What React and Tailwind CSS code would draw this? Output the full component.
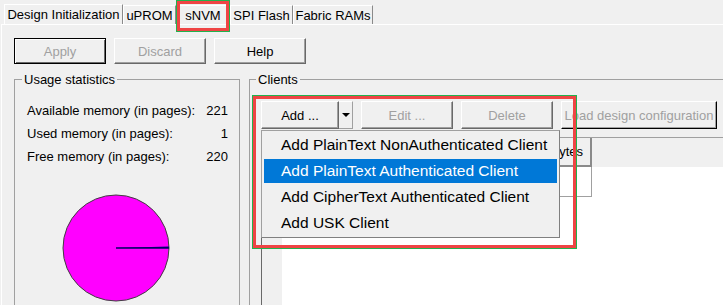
import React from 'react';

const btn =
  'flex items-center justify-center bg-[#f0f0f0] border border-t-white border-l-white border-r-[#696969] border-b-[#696969] shadow-[inset_-1px_-1px_0_#a0a0a0]';
const btnDefault =
  'flex items-center justify-center bg-[#f0f0f0] border border-black shadow-[inset_1px_1px_0_#fff,inset_-1px_-1px_0_#696969]';
const btnDark =
  'flex items-center justify-center bg-[#f0f0f0] border border-t-white border-l-white border-r-black border-b-black shadow-[inset_-1px_-1px_0_#a0a0a0]';

const tabs = [
  { label: 'Design Initialization', w: 'w-[119px] h-[20px]' },
  { label: 'uPROM', w: 'w-[53px] h-[19px]' },
  { label: 'sNVM', w: 'w-[54px] h-[19px]' },
  { label: 'SPI Flash', w: 'w-[63px] h-[19px]' },
  { label: 'Fabric RAMs', w: 'w-[80px] h-[19px]' },
];

const stats = [
  ['Available memory (in pages):', '221'],
  ['Used memory (in pages):', '1'],
  ['Free memory (in pages):', '220'],
];

const menuItems = [
  'Add PlainText NonAuthenticated Client',
  'Add PlainText Authenticated Client',
  'Add CipherText Authenticated Client',
  'Add USK Client',
];

function Pie() {
  return (
    <svg width="110" height="110" viewBox="0 0 110 110" className="block">
      <circle cx="55" cy="55" r="53" fill="#ff00ff" stroke="#404040" strokeWidth="1" />
      <path d="M55 55 L108 55 A53 53 0 0 0 107.98 53.49 Z" fill="#000080" />
      <line x1="55" y1="55" x2="108" y2="55" stroke="#000060" strokeWidth="1.5" />
    </svg>
  );
}

export default function App() {
  return (
    <div className="relative w-[723px] h-[305px] overflow-hidden bg-[#f0f0f0] font-['Liberation_Sans',Arial,sans-serif] text-[13px] leading-[15px] text-black">
      {/* tab strip */}
      <div className="flex h-[24px] items-end pl-[4px]">
        {tabs.map((t) => (
          <div
            key={t.label}
            className={`${t.w} flex items-center justify-center border-l border-t border-r border-l-white border-t-white border-r-[#8a8a8a]`}
          >
            {t.label}
          </div>
        ))}
      </div>

      {/* tab page */}
      <div className="ml-[1px] border-t border-l border-white pt-[13px] pl-[12px]">
        <div className="flex gap-[8px]">
          <div className={`${btnDefault} w-[92px] h-[26px] text-[#a0a0a0]`}>Apply</div>
          <div className={`${btn} w-[92px] h-[26px] text-[#a0a0a0]`}>Discard</div>
          <div className={`${btn} w-[92px] h-[26px]`}>Help</div>
        </div>

        <div className="flex gap-[9px] mt-[8px]">
          <fieldset className="w-[226px] h-[240px] shrink-0 border border-[#a0a0a0]">
            <legend className="ml-[7px] px-[2px]">Usage statistics</legend>
            <div className="pt-[12px] pl-[12px] pr-[11px]">
              {stats.map(([k, v]) => (
                <div key={k} className="flex h-[23px] items-center justify-between">
                  <span>{k}</span>
                  <span>{v}</span>
                </div>
              ))}
            </div>
            <div className="mt-[25px] ml-[46px]">
              <Pie />
            </div>
          </fieldset>

          <fieldset className="w-[520px] h-[240px] shrink-0 border border-[#a0a0a0]">
            <legend className="ml-[6px] px-[2px]">Clients</legend>
            <div className="pt-[14px] pl-[11px]">
              <div className="flex h-[28px] gap-[8px]">
                <div className="flex">
                  <div className={`${btn} w-[78px] h-[28px]`}>Add ...</div>
                  <div className="flex w-[14px] h-[28px] items-center justify-center border-t border-r border-b border-t-white border-r-[#a0a0a0] border-b-[#a0a0a0]">
                    <div className="w-0 h-0 border-l-[4px] border-r-[4px] border-t-[4px] border-l-transparent border-r-transparent border-t-black" />
                  </div>
                </div>
                <div className={`${btn} w-[92px] h-[28px] text-[#a0a0a0]`}>Edit ...</div>
                <div className={`${btn} w-[92px] h-[28px] text-[#a0a0a0]`}>Delete</div>
                <div className={`${btnDark} w-[156px] h-[28px] text-[#a0a0a0]`}>Load design configuration</div>
              </div>

              {/* clients grid, mostly hidden by the open menu */}
              <div className="mt-[8px] border-t border-l border-t-[#a0a0a0] border-l-[#696969]">
                <div className="flex h-[29px] bg-[#f0f0f0]">
                  <div className="w-[20px] shrink-0" />
                  <div className="w-[110px] shrink-0 border-r-2 border-b-2 border-[#8a8a8a]" />
                  <div className="w-[88px] shrink-0 border-r-2 border-b-2 border-[#8a8a8a]" />
                  <div className="w-[112px] shrink-0 flex items-center justify-end pr-[7px] border-r-2 border-b-2 border-[#8a8a8a]">Bytes</div>
                </div>
                <div className="flex h-[140px]">
                  <div className="w-[20px] shrink-0 bg-[#f0f0f0]" />
                  <div className="flex-1 bg-white">
                    <div className="flex h-[30px]">
                      <div className="w-[110px] shrink-0 border-r border-b border-[#a0a0a0]" />
                      <div className="w-[88px] shrink-0 border-r border-b border-[#a0a0a0]" />
                      <div className="w-[112px] shrink-0 border-r border-b border-[#a0a0a0]" />
                    </div>
                  </div>
                </div>
              </div>
            </div>
          </fieldset>
        </div>
      </div>

      {/* Add ... dropdown menu */}
      <div className="absolute left-[261px] top-[130px] w-[299px] h-[108px] border border-[#a0a0a0] border-r-[#808080] border-b-[#808080] bg-[#f0f0f0] pt-[2px] text-[15.5px] leading-[18px]">
        {menuItems.map((item, i) => (
          <div
            key={item}
            className={`mx-[2px] mb-[2px] h-[24px] flex items-center pl-[17px] ${
              i === 1 ? 'bg-[#0078d7] text-white' : ''
            }`}
          >
            {item}
          </div>
        ))}
      </div>

      {/* annotation boxes */}
      <div className="absolute left-[176px] top-0 w-[54px] h-[32px] border border-[#22b14c] pointer-events-none">
        <div className="h-full border-[3px] border-[#ef4444]" />
      </div>
      <div className="absolute left-[252px] top-[95px] w-[325px] h-[154px] border border-[#22b14c] pointer-events-none">
        <div className="h-full border-[3px] border-[#ef4444]" />
      </div>
    </div>
  );
}
